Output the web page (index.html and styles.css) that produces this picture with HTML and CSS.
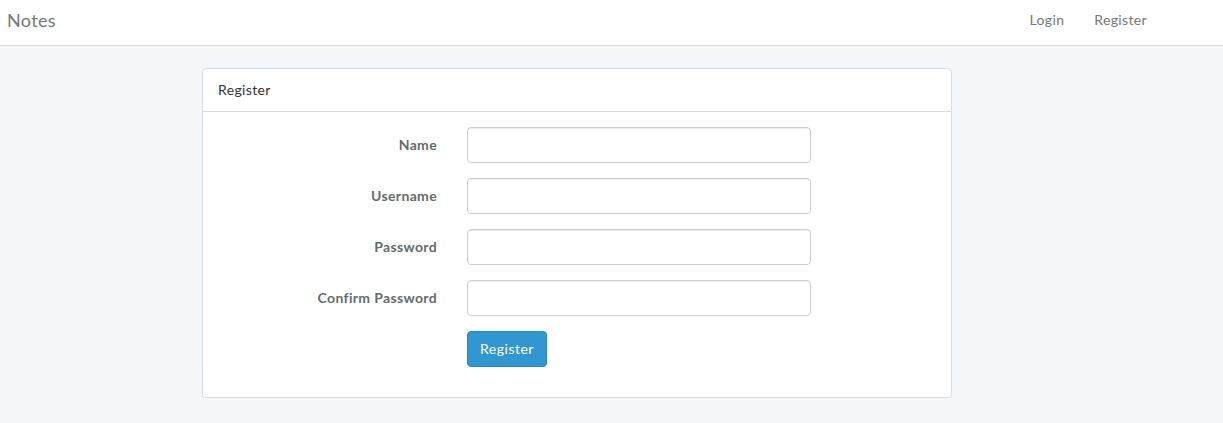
FILE: index.html
```html
<!DOCTYPE html>
<html lang="en">
<head>
  <meta charset="UTF-8">
  <title>Notes</title>
  <link rel="stylesheet" href="styles.css">
</head>
<body>
  <nav class="navbar">
    <a class="brand" href="#">Notes</a>
    <ul class="nav-links">
      <li><a href="#">Login</a></li>
      <li><a href="#">Register</a></li>
    </ul>
  </nav>

  <div class="panel">
    <div class="panel-heading">Register</div>
    <div class="panel-body">
      <form class="form">
        <div class="form-group">
          <label for="name">Name</label>
          <input type="text" id="name">
        </div>
        <div class="form-group">
          <label for="username">Username</label>
          <input type="text" id="username">
        </div>
        <div class="form-group">
          <label for="password">Password</label>
          <input type="password" id="password">
        </div>
        <div class="form-group">
          <label for="password-confirm">Confirm Password</label>
          <input type="password" id="password-confirm">
        </div>
        <div class="form-group">
          <span></span>
          <div><button type="submit" class="btn-primary">Register</button></div>
        </div>
      </form>
    </div>
  </div>
</body>
</html>
```

FILE: styles.css
```css
* {
  box-sizing: border-box;
}
body {
  margin: 0;
  font-family: "Lato", "Open Sans", sans-serif;
  font-size: 14px;
  line-height: 1.6;
  letter-spacing: 0.35px;
  color: #636b6f;
  background: #f5f8fa;
}
a {
  text-decoration: none;
}
.navbar {
  display: flex;
  justify-content: space-between;
  align-items: center;
  height: 46px;
  padding: 0 61px 0 7px;
  background: #fff;
  border-bottom: 1px solid #d3e0e9;
}
.brand {
  font-size: 18px;
  color: #777;
  margin-top: -5px;
}
.nav-links {
  display: flex;
  list-style: none;
  margin: 0;
  padding: 0;
  margin-top: -4px;
}
.nav-links a {
  display: block;
  padding: 0 15px;
  color: #777;
}
.panel {
  width: 750px;
  margin: 22px 0 0 202px;
  background: #fff;
  border: 1px solid #d3e0e9;
  border-radius: 4px;
  box-shadow: 0 1px 1px rgba(0, 0, 0, 0.05);
}
.panel-heading {
  padding: 10px 15px;
  color: #333;
  border-bottom: 1px solid #d3e0e9;
}
.panel-body {
  padding: 15px;
}
.form-group {
  display: grid;
  grid-template-columns: 219px 344px;
  column-gap: 30px;
  align-items: center;
  margin-bottom: 15px;
}
.form-group label {
  text-align: right;
  font-weight: 700;
}
.form-group input {
  height: 36px;
  padding: 6px 12px;
  font: inherit;
  color: #555;
  border: 1px solid #ccd0d2;
  border-radius: 4px;
  box-shadow: inset 0 1px 1px rgba(0, 0, 0, 0.075);
}
.btn-primary {
  height: 36px;
  width: 80px;
  padding: 6px 0;
  font: inherit;
  letter-spacing: 0.5px;
  color: #fff;
  background: #3097d1;
  border: 1px solid #2a88bd;
  border-radius: 4px;
}
```
